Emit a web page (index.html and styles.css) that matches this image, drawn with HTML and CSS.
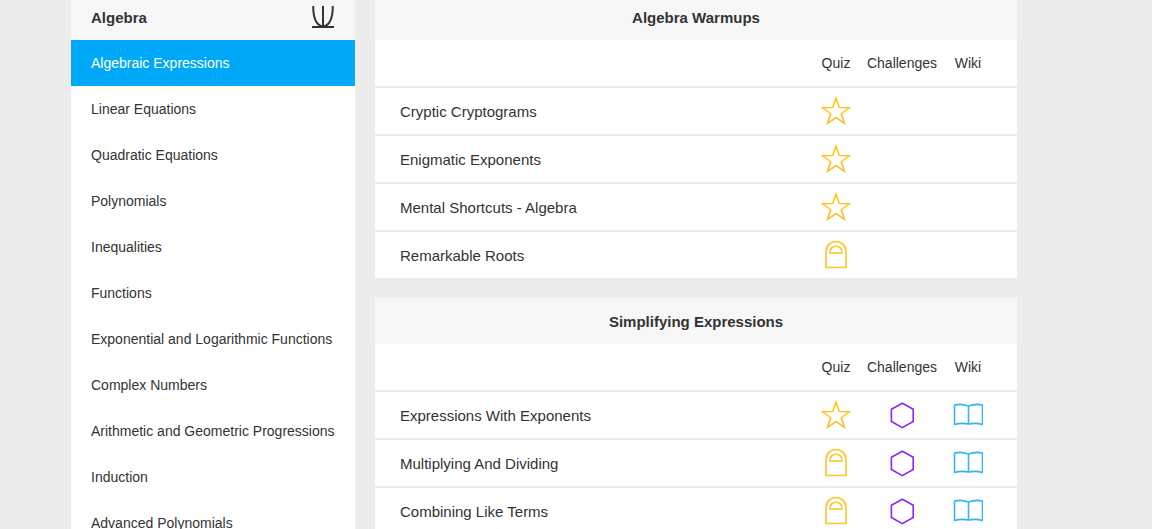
FILE: index.html
```html
<!DOCTYPE html>
<html lang="en">
<head>
    <meta charset="UTF-8">
    <meta name="viewport" content="width=device-width, initial-scale=1.0">
    <title>Algebra</title>
    <link rel="stylesheet" href="styles.css">
</head>
<body>
    <!-- shared icons -->
    <svg class="sprite" aria-hidden="true">
        <symbol id="star" viewBox="0 0 30 30">
            <path d="M15 2.2 L18.3 11.5 L28.4 11.8 L20.3 17.7 L23.4 27.3 L15 21.5 L6.6 27.3 L9.7 17.7 L1.6 11.8 L11.7 11.5 Z"/>
        </symbol>
        <symbol id="door" viewBox="0 0 30 30">
            <path d="M5 27.5 V11.5 A10 10 0 0 1 25 11.5 V27.5 Z"/>
            <path d="M9 13 V11.8 A6 5.5 0 0 1 21 11.8 V13 Z"/>
        </symbol>
        <symbol id="hexagon" viewBox="0 0 30 30">
            <path d="M15.3 3.2 L26.2 9.3 V21.5 L15.3 27.6 L4.4 21.5 V9.3 Z"/>
        </symbol>
        <symbol id="book" viewBox="0 0 30 30">
            <path d="M15.5 6 V24 M15.5 6 Q8 3.2 1.5 5.2 V24.5 Q8 22.5 15.5 24 Q23 22.5 29.5 24.5 V5.2 Q23 3.2 15.5 6"/>
        </symbol>
    </svg>

    <div class="container">
        <nav class="sidebar">
            <div class="title">
                <h2>Algebra</h2>
                <svg class="topic-icon" viewBox="0 0 22 22" aria-hidden="true">
                    <path d="M1.2 0 C1.2 11 4 19.5 11 20.5 C18 19.5 20.8 11 20.8 0 M11 0 V21 M0 21 H22"/>
                </svg>
            </div>
            <ul class="topics">
                <li><a class="active" href="#">Algebraic Expressions</a></li>
                <li><a href="#">Linear Equations</a></li>
                <li><a href="#">Quadratic Equations</a></li>
                <li><a href="#">Polynomials</a></li>
                <li><a href="#">Inequalities</a></li>
                <li><a href="#">Functions</a></li>
                <li><a href="#">Exponential and Logarithmic Functions</a></li>
                <li><a href="#">Complex Numbers</a></li>
                <li><a href="#">Arithmetic and Geometric Progressions</a></li>
                <li><a href="#">Induction</a></li>
                <li><a href="#">Advanced Polynomials</a></li>
            </ul>
        </nav>

        <main class="content">
            <section class="chapter">
                <div class="title"><h2>Algebra Warmups</h2></div>
                <table>
                    <thead>
                        <tr><td class="name"></td><th class="quiz">Quiz</th><th class="challenges">Challenges</th><th class="wiki">Wiki</th></tr>
                    </thead>
                    <tbody>
                        <tr>
                            <td class="name">Cryptic Cryptograms</td>
                            <td><a class="yellow" href="#" aria-label="Quiz"><svg><use href="#star"/></svg></a></td>
                            <td></td>
                            <td></td>
                        </tr>
                        <tr>
                            <td class="name">Enigmatic Exponents</td>
                            <td><a class="yellow" href="#" aria-label="Quiz"><svg><use href="#star"/></svg></a></td>
                            <td></td>
                            <td></td>
                        </tr>
                        <tr>
                            <td class="name">Mental Shortcuts - Algebra</td>
                            <td><a class="yellow" href="#" aria-label="Quiz"><svg><use href="#star"/></svg></a></td>
                            <td></td>
                            <td></td>
                        </tr>
                        <tr>
                            <td class="name">Remarkable Roots</td>
                            <td><a class="yellow" href="#" aria-label="Quiz"><svg><use href="#door"/></svg></a></td>
                            <td></td>
                            <td></td>
                        </tr>
                    </tbody>
                </table>
            </section>

            <section class="chapter">
                <div class="title"><h2>Simplifying Expressions</h2></div>
                <table>
                    <thead>
                        <tr><td class="name"></td><th class="quiz">Quiz</th><th class="challenges">Challenges</th><th class="wiki">Wiki</th></tr>
                    </thead>
                    <tbody>
                        <tr>
                            <td class="name">Expressions With Exponents</td>
                            <td><a class="yellow" href="#" aria-label="Quiz"><svg><use href="#star"/></svg></a></td>
                            <td><a class="purple" href="#" aria-label="Challenges"><svg><use href="#hexagon"/></svg></a></td>
                            <td class="wiki"><a class="blue" href="#" aria-label="Wiki"><svg><use href="#book"/></svg></a></td>
                        </tr>
                        <tr>
                            <td class="name">Multiplying And Dividing</td>
                            <td><a class="yellow" href="#" aria-label="Quiz"><svg><use href="#door"/></svg></a></td>
                            <td><a class="purple" href="#" aria-label="Challenges"><svg><use href="#hexagon"/></svg></a></td>
                            <td class="wiki"><a class="blue" href="#" aria-label="Wiki"><svg><use href="#book"/></svg></a></td>
                        </tr>
                        <tr>
                            <td class="name">Combining Like Terms</td>
                            <td><a class="yellow" href="#" aria-label="Quiz"><svg><use href="#door"/></svg></a></td>
                            <td><a class="purple" href="#" aria-label="Challenges"><svg><use href="#hexagon"/></svg></a></td>
                            <td class="wiki"><a class="blue" href="#" aria-label="Wiki"><svg><use href="#book"/></svg></a></td>
                        </tr>
                    </tbody>
                </table>
            </section>
        </main>
    </div>
</body>
</html>
```
FILE: styles.css
```css
body {
    font-family: 'Liberation Sans', Arial, sans-serif;
    font-size: 15px;
    background-color: #ececec;
    color: #333;
    margin: 0;
}
.sprite {
    display: none;
}
.container {
    display: flex;
    align-items: flex-start;
    gap: 20px;
    max-width: 1010px;
    margin: -6px auto 0;
}
.sidebar {
    flex: 0 0 284px;
    background-color: #fff;
}
.content {
    flex: 1;
    padding-right: 64px;
}
.title {
    display: flex;
    align-items: center;
    justify-content: center;
    height: 46px;
    background-color: #f7f7f7;
}
.title h2 {
    margin: 0;
    font-size: 15px;
    font-weight: bold;
}
.sidebar .title {
    justify-content: space-between;
    padding: 0 21px 0 20px;
}
.topic-icon {
    width: 22px;
    height: 22px;
    fill: none;
    stroke: #333;
    stroke-width: 2;
}
.topics {
    list-style: none;
    margin: 0;
    padding: 0;
}
.topics a {
    display: block;
    padding: 0 20px;
    font-size: 14px;
    line-height: 46px;
    color: #333;
    text-decoration: none;
}
.topics a.active {
    background-color: #00a9f7;
    color: #fff;
}
.chapter {
    margin-bottom: 20px;
    background-color: #fff;
}
table {
    width: 100%;
    border-spacing: 0;
    table-layout: fixed;
}
th, td {
    box-sizing: border-box;
    height: 48px;
    padding: 0;
    text-align: center;
    font-weight: normal;
}
thead th, thead td {
    height: 46px;
    font-size: 14px;
}
tbody td {
    border-top: 2px solid #ececec;
}
.name {
    padding-left: 25px;
    text-align: left;
}
.quiz {
    width: 60px;
}
.challenges {
    width: 72px;
}
.wiki {
    width: 79px;
    padding-right: 19px;
}
td a {
    display: block;
    height: 30px;
}
td svg {
    width: 30px;
    height: 30px;
    fill: none;
    stroke: currentColor;
    stroke-width: 1.6;
}
.yellow {
    color: #fdc425;
}
.purple {
    color: #9322f5;
}
.blue {
    color: #35b5f8;
}
```
